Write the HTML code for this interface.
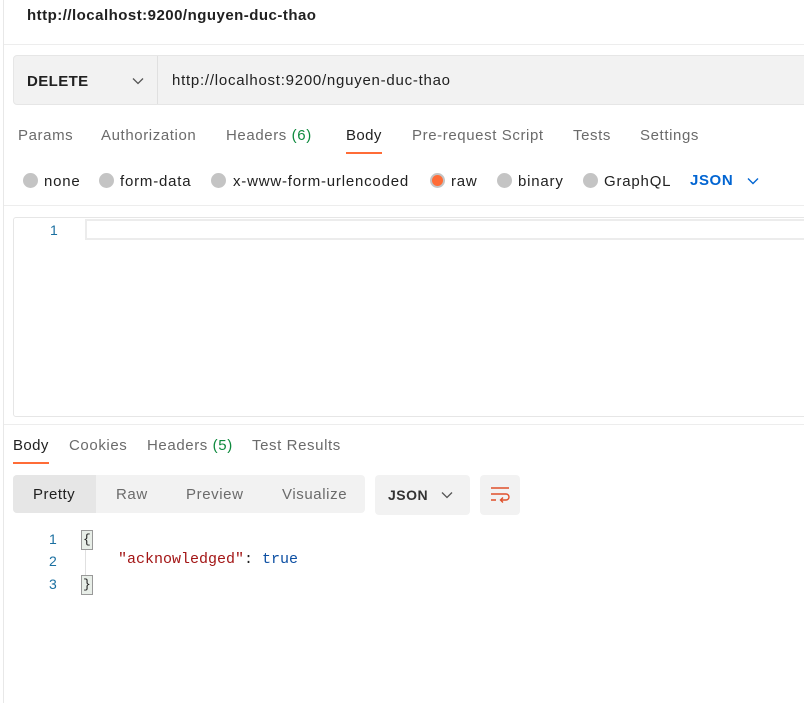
<!DOCTYPE html>
<html><head><style>
*{margin:0;padding:0;box-sizing:border-box}
body{width:804px;height:703px;background:#fff;font-family:"Liberation Sans",sans-serif;position:relative;overflow:hidden;color:#212121}
.a{position:absolute;white-space:nowrap}
.t{font-size:15px;color:#6b6b6b;letter-spacing:0.6px}
.r{font-size:15px;color:#212121;letter-spacing:0.8px}
.dot{position:absolute;width:15px;height:15px;border-radius:50%;background:#c4c4c4}
.mono{font-family:"Liberation Mono",monospace;font-size:15px}
</style></head><body>
<div class="a" style="left:3px;top:0;width:1px;height:703px;background:#e8e8e8"></div>
<div class="a" style="left:27px;top:7px;font-size:15px;font-weight:bold;color:#212121;letter-spacing:0.48px">http://localhost:9200/nguyen-duc-thao</div>
<div class="a" style="left:4px;top:44px;width:800px;height:1px;background:#ededed"></div>
<div class="a" style="left:13px;top:55px;width:795px;height:50px;background:#f2f2f2;border:1px solid #e6e6e6;border-radius:4px"></div>
<div class="a" style="left:157px;top:56px;width:1px;height:48px;background:#e0e0e0"></div>
<div class="a" style="left:27px;top:73px;font-size:15px;font-weight:bold;letter-spacing:0.4px">DELETE</div>
<svg class="a" style="left:132px;top:77px" width="12" height="8"><path d="M1 1.5 L6 6.5 L11 1.5" stroke="#555" stroke-width="1.3" fill="none"/></svg>
<div class="a" style="left:172px;top:72px;font-size:15px;letter-spacing:0.75px">http://localhost:9200/nguyen-duc-thao</div>
<div class="a t" style="left:18px;top:127px">Params</div>
<div class="a t" style="left:101px;top:127px">Authorization</div>
<div class="a t" style="left:226px;top:127px">Headers <span style="color:#0e8a3e">(6)</span></div>
<div class="a r" style="left:346px;top:127px;letter-spacing:0.4px">Body</div>
<div class="a" style="left:346px;top:152px;width:36px;height:2px;background:#ff6c37"></div>
<div class="a t" style="left:412px;top:127px">Pre-request Script</div>
<div class="a t" style="left:573px;top:127px">Tests</div>
<div class="a t" style="left:640px;top:127px">Settings</div>
<div class="dot" style="left:23px;top:173px"></div><div class="a r" style="left:44px;top:173px">none</div>
<div class="dot" style="left:99px;top:173px"></div><div class="a r" style="left:120px;top:173px">form-data</div>
<div class="dot" style="left:211px;top:173px"></div><div class="a r" style="left:233px;top:173px">x-www-form-urlencoded</div>
<div class="dot" style="left:430px;top:173px;background:#ff6c37;border:2px solid #c4c4c4"></div><div class="a r" style="left:451px;top:173px">raw</div>
<div class="dot" style="left:497px;top:173px"></div><div class="a r" style="left:518px;top:173px">binary</div>
<div class="dot" style="left:583px;top:173px"></div><div class="a r" style="left:604px;top:173px">GraphQL</div>
<div class="a" style="left:690px;top:172px;font-size:15px;font-weight:bold;color:#0265d2;letter-spacing:0.6px">JSON</div>
<svg class="a" style="left:747px;top:177px" width="12" height="8"><path d="M1 1.5 L6 6.5 L11 1.5" stroke="#0265d2" stroke-width="1.4" fill="none"/></svg>
<div class="a" style="left:4px;top:205px;width:800px;height:1px;background:#ededed"></div>
<div class="a" style="left:13px;top:217px;width:795px;height:200px;border:1px solid #e6e6e6;border-radius:3px"></div>
<div class="a" style="left:85px;top:219px;width:720px;height:21px;border:2px solid #ececec;border-right:none"></div>
<div class="a" style="left:50px;top:222px;font-size:14px;color:#1a6fa0">1</div>
<div class="a" style="left:4px;top:424px;width:800px;height:1px;background:#ededed"></div>
<div class="a r" style="left:13px;top:437px;letter-spacing:0.4px">Body</div>
<div class="a" style="left:13px;top:462px;width:36px;height:2px;background:#ff6c37"></div>
<div class="a t" style="left:69px;top:437px">Cookies</div>
<div class="a t" style="left:147px;top:437px">Headers <span style="color:#0e8a3e">(5)</span></div>
<div class="a t" style="left:252px;top:437px">Test Results</div>
<div class="a" style="left:13px;top:475px;width:352px;height:38px;background:#f2f2f2;border-radius:4px"></div>
<div class="a" style="left:13px;top:475px;width:83px;height:38px;background:#e6e6e6;border-radius:4px 0 0 4px"></div>
<div class="a r" style="left:33px;top:486px;letter-spacing:0.5px">Pretty</div>
<div class="a t" style="left:116px;top:486px">Raw</div>
<div class="a t" style="left:186px;top:486px">Preview</div>
<div class="a t" style="left:282px;top:486px">Visualize</div>
<div class="a" style="left:375px;top:475px;width:95px;height:40px;background:#f2f2f2;border-radius:4px"></div>
<div class="a" style="left:388px;top:487px;font-size:14px;font-weight:bold;color:#333;letter-spacing:0.5px">JSON</div>
<svg class="a" style="left:441px;top:491px" width="12" height="8"><path d="M1 1.5 L6 6.5 L11 1.5" stroke="#555" stroke-width="1.3" fill="none"/></svg>
<div class="a" style="left:480px;top:475px;width:40px;height:40px;background:#f2f2f2;border-radius:4px"></div>
<svg class="a" style="left:490px;top:486px" width="20" height="18"><path d="M1 2H19M1 8H16a3 3 0 0 1 0 6H11M13 11.5L10.5 14L13 16.5M1 14H6" stroke="#e0502a" stroke-width="1.4" fill="none"/></svg>
<div class="a" style="left:85px;top:530px;width:1px;height:62px;background:#e0e0e0"></div>
<div class="a" style="left:49px;top:531px;font-size:14px;color:#1a6fa0">1</div>
<div class="a" style="left:49px;top:553px;font-size:14px;color:#1a6fa0">2</div>
<div class="a" style="left:49px;top:576px;font-size:14px;color:#1a6fa0">3</div>
<div class="a mono" style="left:81px;top:530px;background:#e8eee8;border:1px solid #999;padding:0 1px;line-height:18px;font-size:13px">{</div>
<div class="a mono" style="left:118px;top:551px"><span style="color:#a31515">"acknowledged"</span>: <span style="color:#0b4ea2">true</span></div>
<div class="a mono" style="left:81px;top:575px;background:#e8eee8;border:1px solid #999;padding:0 1px;line-height:18px;font-size:13px">}</div>
</body></html>
